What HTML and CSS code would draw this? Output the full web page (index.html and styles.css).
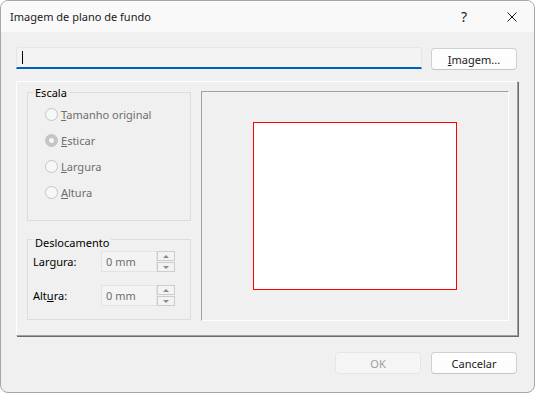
FILE: index.html
```html
<!DOCTYPE html>
<html lang="pt">
<head>
<meta charset="UTF-8">
<title>Imagem de plano de fundo</title>
<link rel="stylesheet" href="styles.css">
</head>
<body>

<div class="window">
  <div class="titlebar">
    <span class="title">Imagem de plano de fundo</span>
    <span class="help">?</span>
    <span class="close">
      <svg width="10" height="10" viewBox="0 0 10 10"><path d="M0.5 0.5 L9.5 9.5 M9.5 0.5 L0.5 9.5" stroke="#1b1b1b" stroke-width="1" fill="none"/></svg>
    </span>
  </div>

  <div class="content">
    <div class="path-row">
      <div class="path-field"><span class="caret"></span></div>
      <button class="btn"><u>I</u>magem...</button>
    </div>

    <div class="panel">
      <div class="options">
        <div class="group scale">
          <div class="legend">Escala</div>
          <div class="radio"><span class="dot"></span><span><u>T</u>amanho original</span></div>
          <div class="radio"><span class="dot checked"></span><span><u>E</u>sticar</span></div>
          <div class="radio"><span class="dot"></span><span><u>L</u>argura</span></div>
          <div class="radio"><span class="dot"></span><span><u>A</u>ltura</span></div>
        </div>

        <div class="group offset">
          <div class="legend">Deslocamento</div>
          <div class="field-row">
            <span class="field-label">Lar<u>g</u>ura:</span>
            <div class="spin-input">0 mm</div>
            <div class="spin-btns">
              <span class="arrow up"></span>
              <span class="arrow down"></span>
            </div>
          </div>
          <div class="field-row">
            <span class="field-label">Alt<u>u</u>ra:</span>
            <div class="spin-input">0 mm</div>
            <div class="spin-btns">
              <span class="arrow up"></span>
              <span class="arrow down"></span>
            </div>
          </div>
        </div>
      </div>

      <div class="preview">
        <div class="page"></div>
      </div>
    </div>

    <div class="actions">
      <button class="btn" disabled>OK</button>
      <button class="btn">Cancelar</button>
    </div>
  </div>
</div>

</body>
</html>
```

FILE: styles.css
```css
body {
  margin: 0;
  background: #ffffff;
  font-family: "Noto Sans", "Open Sans", sans-serif;
  font-size: 11px;
  color: #000;
}
.window {
  width: 535px;
  height: 393px;
  box-sizing: border-box;
  border: 1px solid #a6a6a6;
  border-radius: 8px;
  background: #f0f0f0;
  overflow: hidden;
}
.titlebar {
  height: 31px;
  display: flex;
  align-items: center;
  padding-left: 9px;
  background: #f9f9f9;
}
.title {
  flex: 1;
  color: #1a1a1a;
}
.help {
  width: 10px;
  margin-right: 36px;
  font-size: 14px;
  color: #1a1a1a;
}
.close {
  display: flex;
  margin-right: 17px;
}
.content {
  padding: 0 16px 0 15px;
}
.path-row {
  display: flex;
  align-items: flex-start;
  padding-top: 15px;
}
.path-field {
  flex: 1;
  height: 22px;
  box-sizing: border-box;
  border: 1px solid #e6e6e6;
  border-bottom: 2px solid #005fb8;
  border-radius: 3px 3px 0 0;
  background: #f3f3f3;
  padding: 3px 0 0 5px;
}
.caret {
  display: block;
  width: 1px;
  height: 13px;
  background: #000;
}
.btn {
  width: 86px;
  height: 22px;
  margin: 1px 1px 0 9px;
  padding: 0;
  border: 1px solid #d0d0d0;
  border-bottom-color: #c4c4c4;
  border-radius: 4px;
  background: #fdfdfd;
  font-family: inherit;
  font-size: 11px;
  color: #1a1a1a;
}
.btn:disabled {
  background: #f5f5f5;
  border-color: #e5e5e5;
  color: #a0a0a0;
}
.panel {
  margin-top: 11px;
  height: 255px;
  box-sizing: border-box;
  display: flex;
  align-items: flex-start;
  padding: 9px 8px 0 10px;
  border: 1px solid;
  border-color: #ffffff #a0a0a0 #a0a0a0 #ffffff;
  box-shadow: 1px 1px 0 #6b6b6b;
}
.options {
  width: 164px;
  margin: 1px 10px 0 0;
}
.group {
  border: 1px solid #dcdcdc;
  box-sizing: border-box;
}
.legend {
  display: table;
  margin: -9px 0 0 5px;
  padding: 0 2px;
  background: #f0f0f0;
  line-height: 16px;
}
.scale {
  height: 129px;
  padding-top: 1px;
}
.radio {
  display: flex;
  align-items: center;
  height: 26px;
  padding-left: 17px;
  color: #6d6d6d;
}
.dot {
  width: 13px;
  height: 13px;
  box-sizing: border-box;
  border: 1px solid #c4c4c4;
  border-radius: 50%;
  background: #f7f7f7;
  margin-right: 3px;
  display: flex;
  align-items: center;
  justify-content: center;
}
.dot.checked {
  background: #c4c4c4;
}
.dot.checked::after {
  content: "";
  width: 5px;
  height: 5px;
  border-radius: 50%;
  background: #f5f5f5;
}
.offset {
  height: 81px;
  margin-top: 18px;
  padding-top: 4px;
}
.field-row {
  display: flex;
  align-items: center;
  height: 21px;
  margin-bottom: 13px;
  padding-left: 5px;
}
.field-label {
  width: 68px;
}
.spin-input {
  width: 56px;
  height: 21px;
  box-sizing: border-box;
  border: 1px solid #e3e3e3;
  background: #f3f3f3;
  color: #6d6d6d;
  padding-left: 4px;
  line-height: 19px;
}
.spin-btns {
  width: 18px;
  height: 21px;
  display: flex;
  flex-direction: column;
  gap: 1px;
}
.arrow {
  flex: 1;
  box-sizing: border-box;
  border: 1px solid #cdcdcd;
  background: #f3f3f3;
  display: flex;
  align-items: center;
  justify-content: center;
}
.arrow::after {
  content: "";
  border-left: 3px solid transparent;
  border-right: 3px solid transparent;
}
.arrow.up::after {
  border-bottom: 3px solid #8a8a8a;
}
.arrow.down::after {
  border-top: 3px solid #8a8a8a;
}
.preview {
  width: 308px;
  height: 230px;
  box-sizing: border-box;
  border: 1px solid;
  border-color: #a0a0a0 #ffffff #ffffff #a0a0a0;
  display: flex;
  align-items: center;
  justify-content: center;
}
.page {
  width: 204px;
  height: 168px;
  box-sizing: border-box;
  border: 1px solid #ff0000;
  background: #ffffff;
}
.actions {
  display: flex;
  justify-content: flex-end;
  margin-top: 16px;
}
.actions .btn {
  margin: 0 1px 0 9px;
}
```
